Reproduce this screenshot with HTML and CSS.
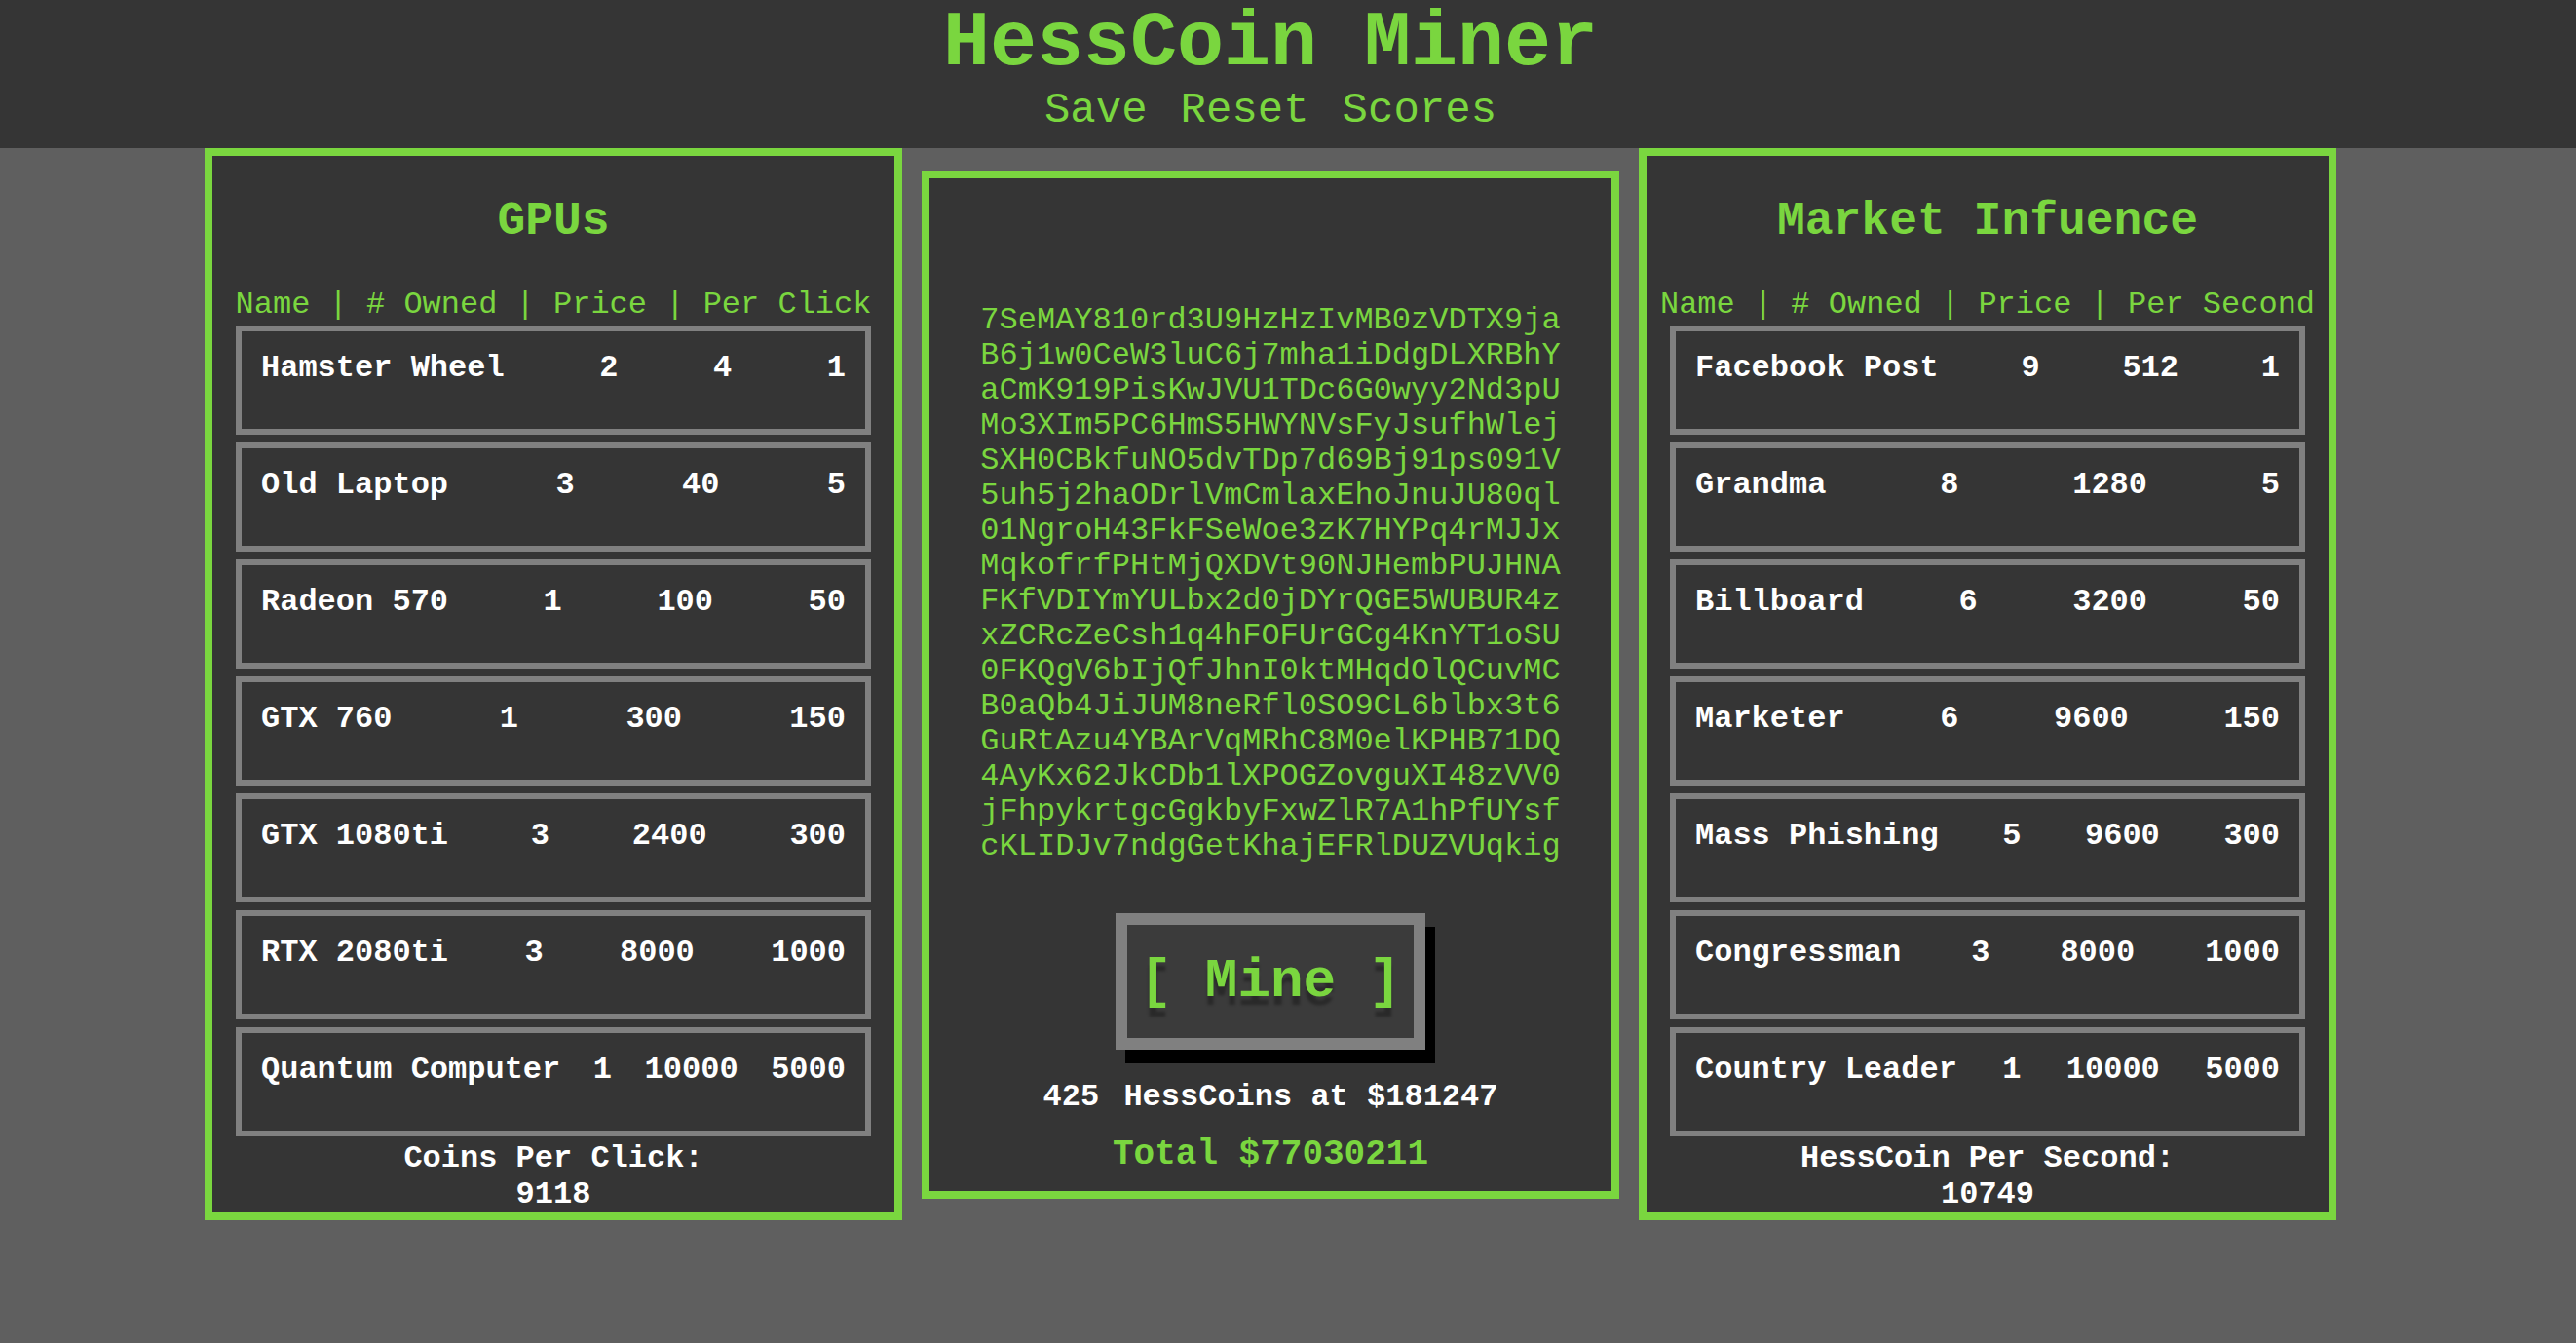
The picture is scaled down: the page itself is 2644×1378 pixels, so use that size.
FILE: index.html
```html
<!DOCTYPE html>
<html lang="en">
<head>
<meta charset="utf-8">
<title>HessCoin Miner</title>
<link rel="stylesheet" href="styles.css">
</head>
<body>
<header class="top">
  <div class="top-inner">
    <h1 class="title">HessCoin Miner</h1>
    <nav class="nav"><a href="#">Save</a><a href="#">Reset</a><a href="#">Scores</a></nav>
  </div>
</header>
<main class="main">
  <section class="panel side">
    <h2 class="panel-title">GPUs</h2>
    <div class="cols">Name | # Owned | Price | Per Click</div>
    <div class="list">
      <div class="item"><span>Hamster Wheel</span><span>2</span><span>4</span><span>1</span></div>
      <div class="item"><span>Old Laptop</span><span>3</span><span>40</span><span>5</span></div>
      <div class="item"><span>Radeon 570</span><span>1</span><span>100</span><span>50</span></div>
      <div class="item"><span>GTX 760</span><span>1</span><span>300</span><span>150</span></div>
      <div class="item"><span>GTX 1080ti</span><span>3</span><span>2400</span><span>300</span></div>
      <div class="item"><span>RTX 2080ti</span><span>3</span><span>8000</span><span>1000</span></div>
      <div class="item"><span>Quantum Computer</span><span>1</span><span>10000</span><span>5000</span></div>
    </div>
    <div class="foot">Coins Per Click:<br>9118</div>
  </section>
  <section class="panel center">
    <p class="hash">7SeMAY810rd3U9HzHzIvMB0zVDTX9ja<br>B6j1w0CeW3luC6j7mha1iDdgDLXRBhY<br>aCmK919PisKwJVU1TDc6G0wyy2Nd3pU<br>Mo3XIm5PC6HmS5HWYNVsFyJsufhWlej<br>SXH0CBkfuNO5dvTDp7d69Bj91ps091V<br>5uh5j2haODrlVmCmlaxEhoJnuJU80ql<br>01NgroH43FkFSeWoe3zK7HYPq4rMJJx<br>MqkofrfPHtMjQXDVt90NJHembPUJHNA<br>FKfVDIYmYULbx2d0jDYrQGE5WUBUR4z<br>xZCRcZeCsh1q4hFOFUrGCg4KnYT1oSU<br>0FKQgV6bIjQfJhnI0ktMHqdOlQCuvMC<br>B0aQb4JiJUM8neRfl0SO9CL6blbx3t6<br>GuRtAzu4YBArVqMRhC8M0elKPHB71DQ<br>4AyKx62JkCDb1lXPOGZovguXI48zVV0<br>jFhpykrtgcGgkbyFxwZlR7A1hPfUYsf<br>cKLIDJv7ndgGetKhajEFRlDUZVUqkig</p>
    <div class="mine">[ Mine ]</div>
    <div class="coins"><span class="num">425</span> HessCoins at $181247</div>
    <div class="total">Total $77030211</div>
  </section>
  <section class="panel side">
    <h2 class="panel-title">Market Infuence</h2>
    <div class="cols">Name | # Owned | Price | Per Second</div>
    <div class="list">
      <div class="item"><span>Facebook Post</span><span>9</span><span>512</span><span>1</span></div>
      <div class="item"><span>Grandma</span><span>8</span><span>1280</span><span>5</span></div>
      <div class="item"><span>Billboard</span><span>6</span><span>3200</span><span>50</span></div>
      <div class="item"><span>Marketer</span><span>6</span><span>9600</span><span>150</span></div>
      <div class="item"><span>Mass Phishing</span><span>5</span><span>9600</span><span>300</span></div>
      <div class="item"><span>Congressman</span><span>3</span><span>8000</span><span>1000</span></div>
      <div class="item"><span>Country Leader</span><span>1</span><span>10000</span><span>5000</span></div>
    </div>
    <div class="foot">HessCoin Per Second:<br>10749</div>
  </section>
</main>
</body>
</html>
```

FILE: styles.css
```css
body {
  margin: 0;
  background: #5f5f5f;
  font-family: "Liberation Mono", "Courier New", monospace;
}

.top {
  background: #353535;
  height: 152px;
}

.top-inner {
  width: 2608px;
  padding-top: 5px;
  text-align: center;
}

.title {
  margin: 0;
  font-size: 80px;
  line-height: 80px;
  font-weight: bold;
  color: #7ad63f;
}

.nav {
  display: flex;
  justify-content: center;
  gap: 34px;
  margin-top: 3px;
  font-size: 44px;
}

.nav a {
  color: #7ad63f;
  text-decoration: none;
}

.main {
  width: 2608px;
  display: flex;
  justify-content: center;
  align-items: center;
  gap: 20px;
}

.panel {
  width: 716px;
  box-sizing: border-box;
  border: 8px solid #7ad63f;
  background: #353535;
}

.side {
  padding: 40px 24px 0;
}

.panel-title {
  margin: 0;
  font-size: 48px;
  font-weight: bold;
  text-align: center;
  color: #7ad63f;
}

.cols {
  margin: 40px -24px 0;
  display: flex;
  justify-content: center;
  font-size: 32px;
  color: #7ad63f;
  white-space: pre;
}

.list {
  margin-top: 3px;
  display: flex;
  flex-direction: column;
  gap: 8px;
}

.item {
  height: 112px;
  box-sizing: border-box;
  border: 6px solid #808080;
  padding: 19px 20px 0;
  display: flex;
  justify-content: space-between;
  align-items: flex-start;
  font-size: 32px;
  font-weight: bold;
  color: #ffffff;
  white-space: pre;
}

.foot {
  margin-top: 4px;
  text-align: center;
  font-size: 32px;
  font-weight: bold;
  color: #ffffff;
}

.center {
  padding: 128px 0 17px;
  text-align: center;
}

.hash {
  margin: 0;
  font-size: 32px;
  line-height: 36px;
  color: #7ad63f;
}

.mine {
  display: block;
  width: fit-content;
  margin: 50px auto 0;
  border: 12px solid #808080;
  background: #3b3b3b;
  box-shadow: 10px 14px 0 #000000;
  padding: 26px 13px;
  font-size: 56px;
  line-height: 64px;
  font-weight: bold;
  color: #7ad63f;
  white-space: pre;
  text-shadow: 0 9px 3px rgba(0, 0, 0, 0.3);
}

.coins {
  margin-top: 30px;
  font-size: 32px;
  font-weight: bold;
  color: #ffffff;
}

.coins .num {
  margin-right: 6px;
}

.total {
  margin-top: 20px;
  font-size: 36px;
  font-weight: bold;
  color: #7ad63f;
}
```
